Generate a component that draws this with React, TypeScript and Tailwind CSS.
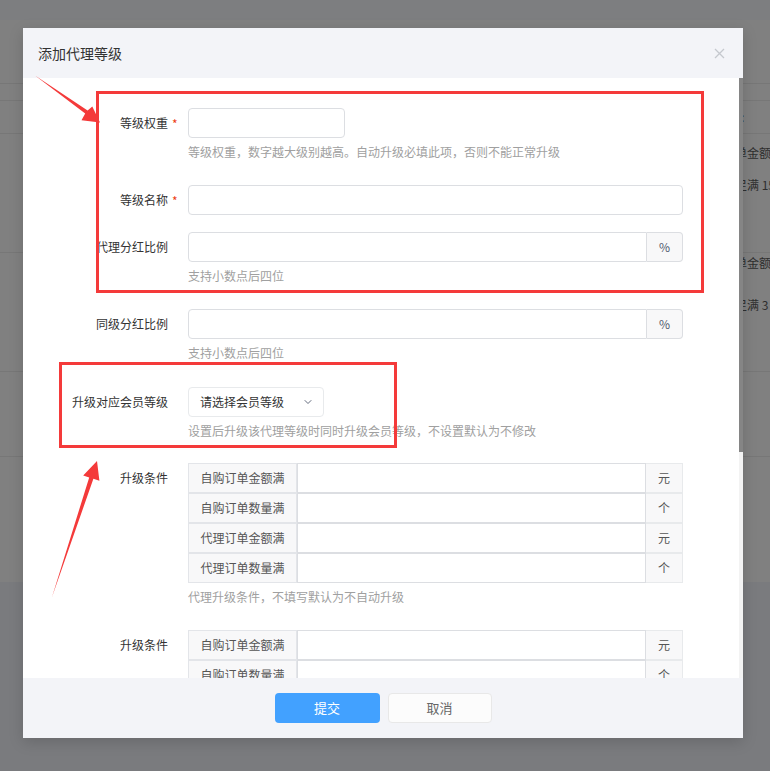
import { ChevronDown } from 'lucide-react';
import type { ReactNode } from 'react';

const FormItem = ({
    label,
    required,
    help,
    children,
    className = 'mb-6',
}: {
    label: string;
    required?: boolean;
    help?: string;
    children: ReactNode;
    className?: string;
}) => {
    return (
        <div className={`flex ${className}`}>
            <div className="relative w-[145px] shrink-0 whitespace-nowrap text-right text-[12px] leading-[30px] text-[#333]">
                {label}
                {required && <span className="absolute left-[149px] top-[1px] text-[12px] text-[#ed4014]">*</span>}
            </div>
            <div className="ml-[20px] w-[495px]">
                {children}
                {help && <div className="mt-[5px] text-[12px] leading-[18px] text-[#a0a0a0]">{help}</div>}
            </div>
        </div>
    );
};

const PercentInput = () => (
    <div className="flex h-[30px]">
        <input className="h-full min-w-0 flex-1 rounded-l-[4px] border border-[#dcdee2] bg-white outline-none" />
        <div className="flex w-[36px] items-center justify-center rounded-r-[4px] border border-l-0 border-[#dcdee2] bg-[#f8f8f9] text-[12px] text-[#515a6e]">
            %
        </div>
    </div>
);

const ConditionRow = ({ name, unit }: { name: string; unit: string }) => (
    <div className="flex h-[30px]">
        <div className="flex w-[109px] items-center justify-center border border-[#e3e5e9] bg-[#f8f8f9] text-[12px] text-[#555]">
            {name}
        </div>
        <input className="h-full min-w-0 flex-1 border border-[#dcdee2] bg-white outline-none" />
        <div className="flex w-[37px] items-center justify-center border border-l-0 border-[#e8eaec] bg-[#f8f8f9] text-[12px] text-[#555]">
            {unit}
        </div>
    </div>
);

const conditions = [
    { name: '自购订单金额满', unit: '元' },
    { name: '自购订单数量满', unit: '个' },
    { name: '代理订单金额满', unit: '元' },
    { name: '代理订单数量满', unit: '个' },
];

const App = () => {
    return (
        <div className="relative h-[771px] w-[770px] overflow-hidden bg-[#808080] font-['Noto_Sans_CJK_SC',sans-serif]">
            {/* page behind the mask */}
            <div className="flex h-full flex-col text-[12px] text-[#2e2e2e]">
                <div className="h-[20px] shrink-0 bg-[#7d7e80]" />
                <div className="h-[64px] shrink-0 border-b border-[#777]" />
                <div className="h-[17px] shrink-0 border-b border-[#777]" />
                <div className="flex h-[33px] shrink-0 items-center border-b border-[#777] pl-[741px]">:</div>
                <div className="flex h-[119px] shrink-0 flex-col border-b border-[#777] pl-[735px] pt-[11px] leading-[16px] whitespace-nowrap">
                    <span>单金额</span>
                    <span className="mt-[16px]">足满 15</span>
                </div>
                <div className="flex h-[119px] shrink-0 flex-col border-b border-[#777] pl-[735px] pt-[2px] leading-[16px] whitespace-nowrap">
                    <span>单金额</span>
                    <span className="mt-[26px]">足满 3</span>
                </div>
                <div className="h-[85px] shrink-0 border-b border-[#777]" />
                <div className="h-[125px] shrink-0" />
                <div className="flex-1 bg-[#7a7b7e]" />
            </div>

            {/* Modal */}
            <div className="absolute left-[23px] top-[28px] flex h-[710px] w-[720px] flex-col bg-white shadow-[0_4px_14px_rgba(0,0,0,0.15)]">
                <div className="flex h-[50px] shrink-0 items-center justify-between bg-[#f3f4f8] pl-[15px] pr-[18px]">
                    <span className="text-[14px] text-[#333]">添加代理等级</span>
                    <svg width="11" height="11" viewBox="0 0 11 11" className="text-[#c5c8ce]">
                        <path d="M1 1L10 10M10 1L1 10" stroke="currentColor" strokeWidth="1.3" fill="none" />
                    </svg>
                </div>

                <div className="flex min-h-0 flex-1">
                    <div className="min-w-0 flex-1 overflow-hidden pt-[30px]">
                        <FormItem label="等级权重" required help="等级权重，数字越大级别越高。自动升级必填此项，否则不能正常升级">
                            <input className="h-[30px] w-[157px] rounded-[4px] border border-[#dcdee2] bg-white outline-none" />
                        </FormItem>
                        <FormItem label="等级名称" required className="mb-[17px]">
                            <input className="h-[30px] w-full rounded-[4px] border border-[#dcdee2] bg-white outline-none" />
                        </FormItem>
                        <FormItem label="代理分红比例" help="支持小数点后四位">
                            <PercentInput />
                        </FormItem>
                        <FormItem label="同级分红比例" help="支持小数点后四位" className="mb-[25px]">
                            <PercentInput />
                        </FormItem>
                        <FormItem label="升级对应会员等级" help="设置后升级该代理等级时同时升级会员等级，不设置默认为不修改" className="mb-[23px]">
                            <div className="flex h-[30px] w-[136px] items-center justify-between rounded-[4px] border border-[#e8eaec] bg-white pl-[11px] pr-[9px] text-[12px] text-[#333]">
                                <span>请选择会员等级</span>
                                <ChevronDown size={12} strokeWidth={1.8} className="text-[#515a6e]" />
                            </div>
                        </FormItem>
                        <FormItem label="升级条件" help="代理升级条件，不填写默认为不自动升级">
                            {conditions.map((c) => (
                                <ConditionRow key={c.name} name={c.name} unit={c.unit} />
                            ))}
                        </FormItem>
                        <FormItem label="升级条件">
                            {conditions.map((c) => (
                                <ConditionRow key={c.name} name={c.name} unit={c.unit} />
                            ))}
                        </FormItem>
                    </div>
                    <div className="flex w-[4px] shrink-0 flex-col bg-[#f3f3f3]">
                        <div className="h-[374px] bg-[#858585]" />
                    </div>
                </div>

                <div className="flex h-[60px] shrink-0 items-center justify-center gap-[8px] bg-[#f3f4f8]">
                    <button className="h-[30px] w-[105px] rounded-[4px] bg-[#42a1ff] text-[13px] text-white">提交</button>
                    <button className="h-[30px] w-[104px] rounded-[4px] border border-[#e8e8e8] bg-[#fcfcfc] text-[13px] text-[#666]">取消</button>
                </div>
            </div>

            {/* red annotations */}
            <svg className="pointer-events-none absolute inset-0" width="770" height="771" viewBox="0 0 770 771">
                <rect x="97.5" y="92.5" width="605" height="199" fill="none" stroke="#f43a3a" strokeWidth="3" />
                <rect x="60.5" y="363.5" width="335" height="83" fill="none" stroke="#f43a3a" strokeWidth="3" />
                <polygon points="35,75.5 87.6,110.4 92.3,106.5 100,122.5 81.5,120.3 85.2,113.6" fill="#f43a3a" />
                <polygon points="52,597 89.2,477.4 83.2,475.4 97,461 99.4,480.8 93.4,478.8" fill="#f43a3a" />
            </svg>
        </div>
    );
};

export default App;
